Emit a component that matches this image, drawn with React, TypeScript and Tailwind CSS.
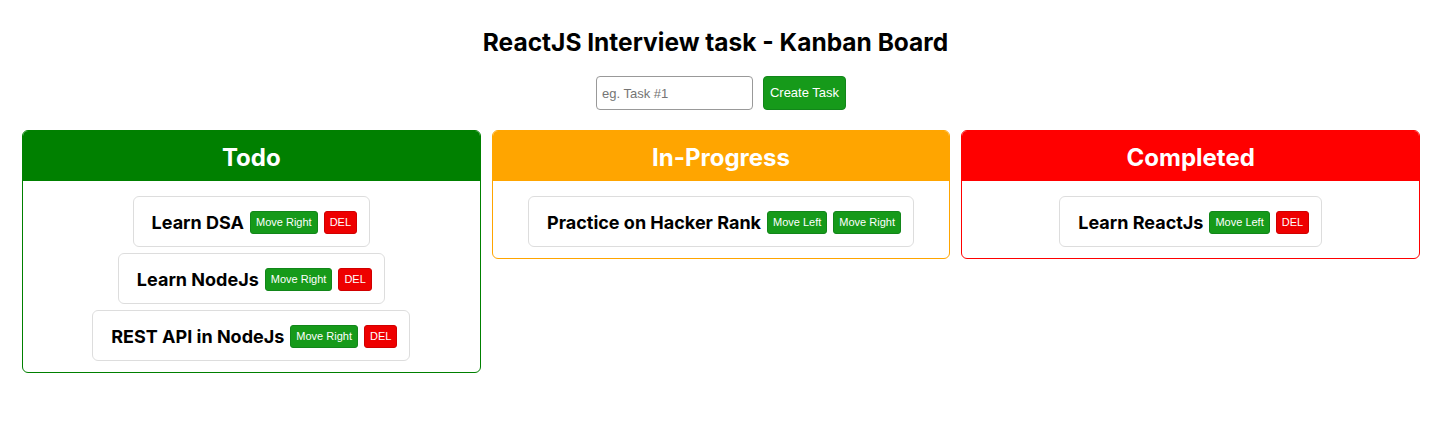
import React from "react";

type Task = { name: string; left?: boolean; right?: boolean; del?: boolean };

const columns: { title: string; head: string; border: string; tasks: Task[] }[] = [
  {
    title: "Todo",
    head: "bg-[#008000]",
    border: "border-[#008000]",
    tasks: [
      { name: "Learn DSA", right: true, del: true },
      { name: "Learn NodeJs", right: true, del: true },
      { name: "REST API in NodeJs", right: true, del: true },
    ],
  },
  {
    title: "In-Progress",
    head: "bg-[#ffa500]",
    border: "border-[#ffa500]",
    tasks: [{ name: "Practice on Hacker Rank", left: true, right: true }],
  },
  {
    title: "Completed",
    head: "bg-[#ff0000]",
    border: "border-[#ff0000]",
    tasks: [{ name: "Learn ReactJs", left: true, del: true }],
  },
];

function SmallBtn({ label, red }: { label: string; red?: boolean }) {
  return (
    <button
      className={`h-[23px] px-[5px] rounded-[3px] text-[11px] text-white font-['Liberation_Sans',Arial,sans-serif] border ${
        red ? "bg-[#ee0000] border-[#d00000]" : "bg-[#169a1a] border-[#12861a]"
      }`}
    >
      {label}
    </button>
  );
}

export default function App() {
  return (
    <div className="min-h-screen bg-white font-['Inter',sans-serif] text-black">
      {/* Header */}
      <h1 className="pt-[27px] text-center text-[24.5px] font-bold leading-[30px] pr-[5px]">
        ReactJS Interview task - Kanban Board
      </h1>
      <div className="mt-[19px] pl-[6px] flex justify-center gap-[10px]">
        <input
          placeholder="eg. Task #1"
          className="w-[157px] h-[34px] px-[5px] rounded-[4px] border border-[#999] text-[13px] font-['Liberation_Sans',Arial,sans-serif] placeholder:text-[#757575] outline-none"
        />
        <button className="h-[34px] w-[83px] rounded-[4px] bg-[#169a1a] border border-[#12861a] text-white text-[13px] font-['Liberation_Sans',Arial,sans-serif]">
          Create Task
        </button>
      </div>

      {/* Board */}
      <div className="mt-[20px] pl-[22px] pr-[16px] flex items-start gap-[11px]">
        {columns.map((col) => (
          <div
            key={col.title}
            className={`flex-1 rounded-[6px] border overflow-hidden ${col.border}`}
          >
            <div
              className={`h-[50px] pt-[3px] flex items-center justify-center text-white text-[24px] font-bold ${col.head}`}
            >
              {col.title}
            </div>
            <div className="flex flex-col items-center gap-[6px] pt-[15px] pb-[11px]">
              {col.tasks.map((t) => (
                <div
                  key={t.name}
                  className="h-[51px] pt-[2px] flex items-center gap-[6px] pl-[18px] pr-[12px] rounded-[6px] border border-[#dddddd]"
                >
                  <span className="text-[18px] font-bold">{t.name}</span>
                  {t.left && <SmallBtn label="Move Left" />}
                  {t.right && <SmallBtn label="Move Right" />}
                  {t.del && <SmallBtn label="DEL" red />}
                </div>
              ))}
            </div>
          </div>
        ))}
      </div>
    </div>
  );
}
